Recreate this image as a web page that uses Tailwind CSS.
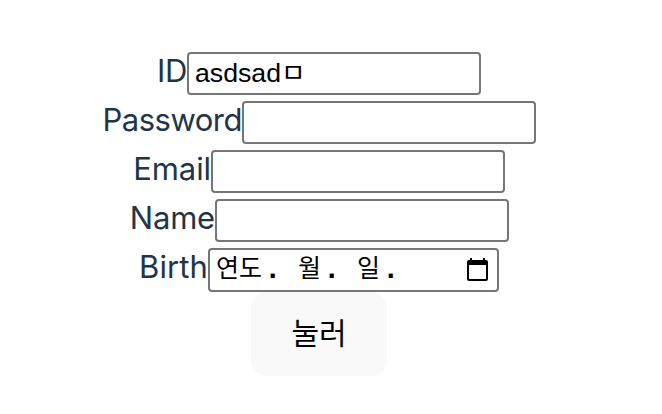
<!DOCTYPE html>
<html lang="ko">
<head>
<meta charset="utf-8">
<title>Form</title>
<script src="https://cdn.jsdelivr.net/npm/@tailwindcss/browser@4"></script>
</head>
<body class="bg-white overflow-hidden">
<form class="flex w-[638px] flex-col items-center pt-[52px] font-['Inter','Noto_Sans_CJK_KR',sans-serif] text-[31px] leading-[38px] text-[#213547]">
  <div class="flex h-[49px]"><label for="id" class="w-[30px] flex justify-end whitespace-nowrap tracking-[-0.4px]">ID</label><input id="id" value="asdsadㅁ" class="h-[43px] w-[294px] rounded-[4px] border-2 border-[#767676] bg-white px-[6px] pb-[6px] font-['Liberation_Sans','Noto_Sans_CJK_KR',sans-serif] text-[26.67px] text-black"></div>
  <div class="flex h-[49px]"><label for="pw" class="w-[140px] flex justify-end whitespace-nowrap tracking-[-0.5px]">Password</label><input id="pw" class="h-[43px] w-[294px] rounded-[4px] border-2 border-[#767676] bg-white"></div>
  <div class="flex h-[49px]"><label for="email" class="w-[78px] flex justify-end whitespace-nowrap tracking-[-0.1px]">Email</label><input id="email" class="h-[43px] w-[294px] rounded-[4px] border-2 border-[#767676] bg-white"></div>
  <div class="flex h-[49px]"><label for="name" class="w-[86px] flex justify-end whitespace-nowrap tracking-[-0.2px]">Name</label><input id="name" class="h-[43px] w-[294px] rounded-[4px] border-2 border-[#767676] bg-white"></div>
  <div class="flex h-[44px]"><span class="w-[69px] flex justify-end whitespace-nowrap tracking-[0.1px]">Birth</span>
    <div class="flex h-[44px] w-[291px] items-center rounded-[4px] border-2 border-[#767676] bg-white pl-[6px] pr-[8px] font-['Noto_Sans_CJK_KR',sans-serif] text-[25px] text-black">
      <span class="w-[48px] whitespace-nowrap pb-[8px]">연도</span><span class="w-[34px] pt-px font-['Liberation_Mono',monospace] text-[29px] font-bold">.</span>
      <span class="w-[25px] pb-[8px]">월</span><span class="w-[34px] pt-px font-['Liberation_Mono',monospace] text-[29px] font-bold">.</span>
      <span class="w-[25px] pb-[8px]">일</span><span class="pt-px font-['Liberation_Mono',monospace] text-[29px] font-bold">.</span>
      <svg class="ml-auto h-[24px] w-[22px]" viewBox="0 0 22 24"><path d="M3 0h2v3H3zM16 0h2v3h-2z"/><path d="M2 2h17a2 2 0 0 1 2 2v17a2 2 0 0 1-2 2H2a2 2 0 0 1-2-2V4a2 2 0 0 1 2-2zM2 7v14h17V7z" fill-rule="evenodd"/></svg>
    </div></div>
  <button type="button" class="h-[84px] w-[136px] rounded-[16px] bg-[#f9f9f9] pb-[6px] font-['Noto_Sans_CJK_KR',sans-serif] text-[30px] font-normal text-black">눌러</button>
</form>
</body>
</html>
